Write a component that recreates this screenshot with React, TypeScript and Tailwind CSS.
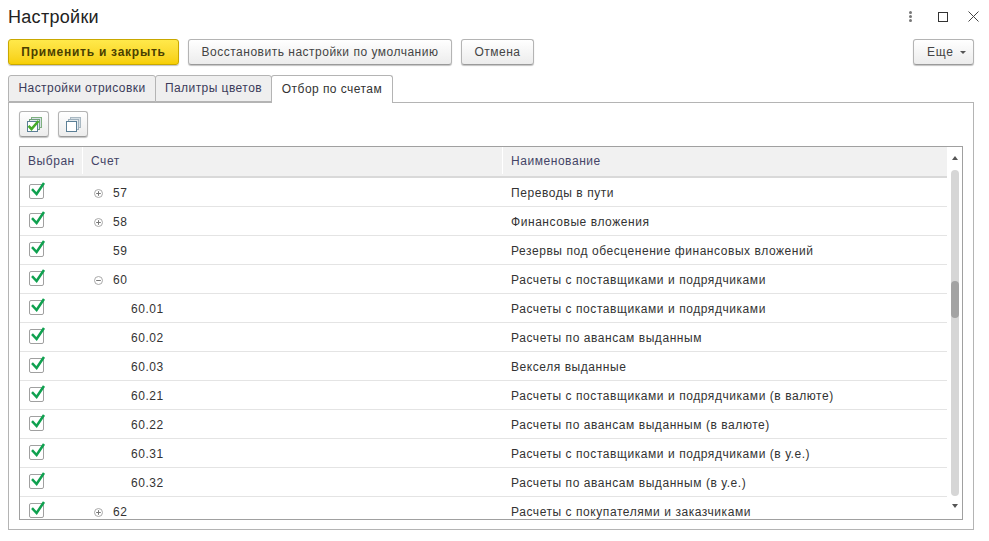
import React from 'react';

const rows = [
  { code: '57', name: 'Переводы в пути', toggle: 'plus', level: 0 },
  { code: '58', name: 'Финансовые вложения', toggle: 'plus', level: 0 },
  { code: '59', name: 'Резервы под обесценение финансовых вложений', toggle: '', level: 0 },
  { code: '60', name: 'Расчеты с поставщиками и подрядчиками', toggle: 'minus', level: 0 },
  { code: '60.01', name: 'Расчеты с поставщиками и подрядчиками', toggle: '', level: 1 },
  { code: '60.02', name: 'Расчеты по авансам выданным', toggle: '', level: 1 },
  { code: '60.03', name: 'Векселя выданные', toggle: '', level: 1 },
  { code: '60.21', name: 'Расчеты с поставщиками и подрядчиками (в валюте)', toggle: '', level: 1 },
  { code: '60.22', name: 'Расчеты по авансам выданным (в валюте)', toggle: '', level: 1 },
  { code: '60.31', name: 'Расчеты с поставщиками и подрядчиками (в у.е.)', toggle: '', level: 1 },
  { code: '60.32', name: 'Расчеты по авансам выданным (в у.е.)', toggle: '', level: 1 },
  { code: '62', name: 'Расчеты с покупателями и заказчиками', toggle: 'plus', level: 0 },
];

const Check = () => (
  <svg width="18" height="18" viewBox="0 0 18 18" className="block">
    <rect x="1.5" y="3.5" width="14" height="14" rx="1.5" fill="#fff" stroke="#a0a0a0" />
    <path d="M4 8.2 L8.6 13 L16 2" fill="none" stroke="#0fa14f" strokeWidth="2.5" />
  </svg>
);

const Toggle = ({ kind }: { kind: string }) => (
  <svg width="9" height="9" viewBox="0 0 9 9" className="block">
    <circle cx="4.5" cy="4.5" r="4" fill="#fff" stroke="#a8a8a8" />
    <path d="M2.2 4.5 H6.8" stroke="#777" />
    {kind === 'plus' && <path d="M4.5 2.2 V6.8" stroke="#777" />}
  </svg>
);

const StackIcon = ({ checked }: { checked?: boolean }) => (
  <svg width="15" height="15" viewBox="0 0 15 15" className="block">
    <rect x="4.5" y="0.5" width="10" height="10" fill="#d5dfe5" stroke={checked ? '#7fb07f' : '#a9b8c2'} />
    <rect x="2.5" y="2.5" width="10" height="10" fill="#e3e9ed" stroke={checked ? '#6f9f7a' : '#9fb0bc'} />
    <rect x="0.5" y="4.5" width="10" height="10" fill="#fff" stroke="#5b7f96" />
    {checked && <path d="M1.5 8.8 L4.5 12 L11.5 4" fill="none" stroke="#45ab2a" strokeWidth="2.6" />}
  </svg>
);

const btn = 'h-[26px] rounded-[3px] border border-[#b4b4b4] border-b-[#9a9a9a] bg-gradient-to-b from-white to-[#ececec] shadow-[0_1px_1px_#c4c4c4] text-[#444] flex items-center justify-center';

export default function App() {
  return (
    <div className="w-[989px] h-[541px] bg-white overflow-hidden flex flex-col px-2 font-['Liberation_Sans',Arial,sans-serif] text-[12px] text-[#333]">
      <div className="h-[39px] shrink-0 flex items-start">
        <div className="text-[18px] leading-[21px] mt-[7px] text-[#222] tracking-[0.3px] flex-1">Настройки</div>
        <div className="flex items-center mt-[11px] mr-[2px]">
          <div className="flex flex-col gap-[1px] mr-[26px]">
            <span className="w-[3px] h-[3px] bg-[#777] rounded-full" />
            <span className="w-[3px] h-[3px] bg-[#777] rounded-full" />
            <span className="w-[3px] h-[3px] bg-[#777] rounded-full" />
          </div>
          <span className="w-[10px] h-[10px] border border-[#333] mr-[20px]" />
          <svg width="11" height="11" viewBox="0 0 11 11" className="block">
            <path d="M0.5 0.5 L10.5 10.5 M10.5 0.5 L0.5 10.5" stroke="#444" strokeWidth="1" fill="none" />
          </svg>
        </div>
      </div>

      <div className="h-[26px] w-[966px] shrink-0 flex">
        <button className="w-[171px] h-[26px] rounded-[3px] border border-[#c9a800] bg-gradient-to-b from-[#ffe94a] to-[#f7cf00] shadow-[0_1px_1px_#c4c4c4] font-bold text-[#4a4000] tracking-[0.75px] flex items-center justify-center">Применить и закрыть</button>
        <button className={`${btn} tracking-[0.5px] w-[264px] ml-[9px]`}>Восстановить настройки по умолчанию</button>
        <button className={`${btn} tracking-[0.5px] w-[73px] ml-[9px]`}>Отмена</button>
        <button className={`${btn} tracking-[0.8px] w-[61px] ml-auto !justify-start pl-[13px] gap-[6px]`}>
          Еще
          <span className="border-x-[3px] border-x-transparent border-t-[3px] border-t-[#555]" />
        </button>
      </div>

      <div className="h-[27px] mt-[10px] shrink-0 flex relative z-10 tracking-[0.45px]">
        <div className="w-[148px] h-[27px] pb-[1px] bg-[#efefef] border border-[#b4b4b4] rounded-t-[3px] flex items-center justify-center text-[#3b3b5a]">Настройки отрисовки</div>
        <div className="w-[117px] -ml-[1px] h-[27px] pb-[1px] bg-[#efefef] border border-[#b4b4b4] rounded-t-[3px] flex items-center justify-center text-[#3b3b5a]">Палитры цветов</div>
        <div className="w-[122px] -ml-[1px] h-[28px] pb-[2px] bg-white border border-[#b4b4b4] border-b-0 rounded-t-[3px] flex items-center justify-center text-[#333]">Отбор по счетам</div>
      </div>

      <div className="w-[966px] h-[428px] border border-[#b4b4b4] px-[10px] pt-[8px]">
        <div className="flex gap-[9px]">
          <button className={`${btn} w-[30px]`}><StackIcon checked /></button>
          <button className={`${btn} w-[30px]`}><StackIcon /></button>
        </div>

        <div className="mt-[9px] w-[944px] h-[374px] border border-[#a0a0a0] flex overflow-hidden">
          <div className="w-[927px] shrink-0">
            <div className="h-[31px] pb-[2px] flex bg-[#f1f1f1] border-b-2 border-[#d9d9d9] text-[#444466] tracking-[0.55px]">
              <div className="w-[63px] pl-[8px] flex items-center border-r border-white">Выбран</div>
              <div className="w-[420px] pl-[8px] flex items-center border-r border-white">Счет</div>
              <div className="flex-1 pl-[8px] flex items-center">Наименование</div>
            </div>
            {rows.map((r) => (
              <div key={r.code} className="h-[29px] flex border-b border-[#e4e4e4] text-[#333] tracking-[0.56px]">
                <div className="w-[62px] pl-[8px] pt-[3px]"><Check /></div>
                <div className="w-[420px] pt-[2px] flex items-center">
                  <div className="w-[11px] ml-[12px] mr-[8px] flex items-center">
                    {r.toggle && <Toggle kind={r.toggle} />}
                  </div>
                  <span className={r.level === 1 ? 'ml-[18px]' : ''}>{r.code}</span>
                </div>
                <div className="flex-1 pl-[9px] pt-[2px] flex items-center">{r.name}</div>
              </div>
            ))}
          </div>
          <div className="flex-1 flex flex-col items-center relative">
            <span className="mt-[9px] border-x-[3px] border-x-transparent border-b-[4px] border-b-[#555]" />
            <div className="mt-[10px] w-[8px] h-[326px] shrink-0 rounded-[4px] bg-[#d6d6d6] relative">
              <div className="absolute top-[111px] w-[8px] h-[37px] rounded-[4px] bg-[#a3a3a3]" />
            </div>
            <span className="mt-[8px] border-x-[3px] border-x-transparent border-t-[4px] border-t-[#555]" />
          </div>
        </div>
      </div>
    </div>
  );
}
